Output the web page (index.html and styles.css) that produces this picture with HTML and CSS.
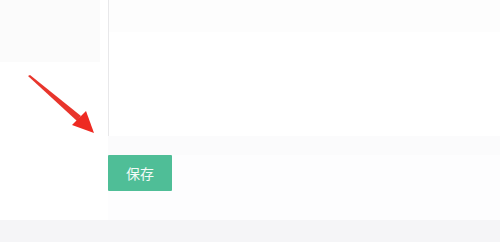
FILE: index.html
```html
<!DOCTYPE html>
<html lang="zh">
<head>
<meta charset="utf-8">
<link rel="stylesheet" href="styles.css">
</head>
<body>
<div class="page">
  <div class="main">
    <div class="side">
      <div class="side-top"></div>
    </div>
    <div class="content">
      <div class="editor">
        <div class="editor-top"></div>
        <div class="editor-body"></div>
      </div>
      <div class="gap-band"></div>
      <div class="actions">
        <button class="btn-save">保存</button>
      </div>
    </div>
  </div>
  <div class="footer"></div>
  <svg class="arrow" width="100" height="140" viewBox="0 0 100 140">
    <polygon points="28,76 30,75 81,116 77,121" fill="#e8352c"/>
    <polygon points="72,125 86,111 94,133" fill="#ee2a22"/>
  </svg>
</div>
</body>
</html>
```
FILE: styles.css
```css
html, body {
  margin: 0;
  padding: 0;
  background: #ffffff;
  font-family: "Noto Sans CJK SC", "Noto Sans", sans-serif;
}
.page {
  position: relative;
  width: 500px;
  height: 242px;
  overflow: hidden;
  display: flex;
  flex-direction: column;
}
.main {
  display: flex;
  height: 220px;
}
.side {
  width: 100px;
  flex: none;
}
.side-top {
  height: 62px;
  background: #fbfbfb;
}
.content {
  flex: 1;
  display: flex;
  flex-direction: column;
  padding-left: 8px;
}
.editor {
  height: 136px;
  border-left: 1px solid #e8e8ea;
  display: flex;
  flex-direction: column;
}
.editor-top {
  height: 32px;
  background: #fdfdfd;
}
.editor-body {
  flex: 1;
  background: #ffffff;
}
.gap-band {
  height: 19px;
  background: #fbfbfc;
}
.actions {
  flex: 1;
  background: #fdfdfe;
}
.btn-save {
  display: block;
  width: 64px;
  height: 36px;
  margin: 0;
  border: none;
  border-radius: 1px;
  background: #4fbe97;
  color: #f4fbf8;
  font-family: "Noto Sans CJK SC", "Noto Sans", sans-serif;
  font-size: 14px;
  padding: 0;
}
.footer {
  height: 22px;
  background: #f5f5f7;
}
.arrow {
  position: absolute;
  left: 0;
  top: 0;
}
```
